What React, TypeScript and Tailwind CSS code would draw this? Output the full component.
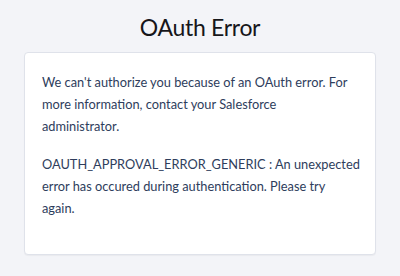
export default function App() {
  return (
    <div className="min-h-[276px] w-[400px] bg-[#f3f4f8] pt-[10px] font-['Lato',sans-serif]">
      <h1 className="text-center text-[23px] leading-[34px] tracking-[-0.3px] text-[#16161a]">OAuth Error</h1>
      <div className="mx-[24px] mt-[8px] rounded-[4px] border border-[#dfe2ea] bg-white pl-[17px] pr-[10px] pt-[18px] pb-[19px] shadow-[0_1px_1px_rgba(0,0,0,0.04)]">
        <p className="mb-[16px] text-[12.8px] leading-[22px] text-[#2e3d5c]">
          We can't authorize you because of an OAuth error. For
          <br />
          more information, contact your Salesforce
          <br />
          administrator.
        </p>
        <p className="mb-[16px] text-[12.8px] leading-[22px] text-[#2e3d5c]">
          OAUTH_APPROVAL_ERROR_GENERIC : An unexpected
          <br />
          error has occured during authentication. Please try
          <br />
          again.
        </p>
      </div>
    </div>
  );
}
